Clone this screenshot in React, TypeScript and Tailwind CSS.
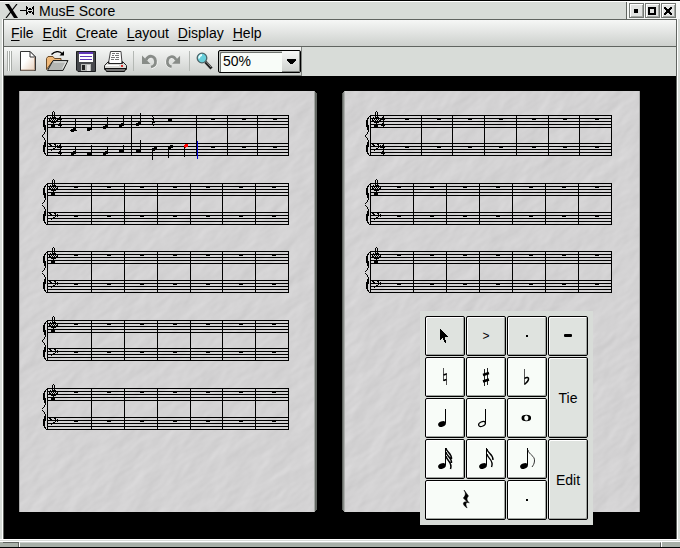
import type { ReactNode } from "react";

/** Draws a small pixel glyph; every "#" is one filled unit square. */
function Bitmap({ rows, x = 0, y = 0, fill = "#000" }: { rows: string[]; x?: number; y?: number; fill?: string }) {
  let d = "";
  rows.forEach((row, r) => {
    for (const run of row.matchAll(/#+/g)) {
      d += `M${x + (run.index ?? 0)} ${y + r}h${run[0].length}v1h${-run[0].length}z`;
    }
  });
  return <path d={d} fill={fill} shapeRendering="crispEdges" />;
}

/* ---------- score ---------- */

const TREBLE = [
  "....#....",
  "...#.#...",
  "...#.#...",
  "...#.#...",
  "...##....",
  "...#.#...",
  ".#.####..",
  "##.#.#.#.",
  "#.#.#.#.#",
  "##.#.#.##",
  ".#.#.#.#.",
  "..#####..",
  "....#....",
  "...###...",
  "..####...",
  "..####...",
  "...##....",
];
const BASS = [
  "..###...#",
  "##...##..",
  ".##...#.#",
  ".....##..",
  "......#.#",
  "....##...",
  "...#.....",
  "..#......",
];
const BRACE_TOP = [
  "....#", "...#.", "..##.", "..#..", ".##..", ".##..", ".##..", ".##..", ".##..", ".###.", ".###.",
  "..##.", "..##.", "..##.", "...#.", "...#.", "..#..", "..#..", ".#...", "#....",
];
const BRACE_BOTTOM = [...BRACE_TOP].reverse();
const FOUR = ["..#.", ".##.", "#.#.", "####", "..#."];
const QUARTER_REST = ["#..", ".#.", "##.", "##.", ".#.", "..#", "###", "#..", "#..", ".#."];
const HEAD = ["..###", "#####", "#####", "###.."];

type Note = { x: number; y: number; tip: number; down?: boolean; color?: string };
type SystemData = { y: number; bass: number; bars: number[]; rests: number[]; time?: boolean; notes?: boolean };

const NOTES: Note[] = [
  { x: 24, y: 13, tip: 3 },
  { x: 40, y: 12, tip: 4 },
  { x: 56, y: 10, tip: 2 },
  { x: 72, y: 8, tip: 1 },
  { x: 89, y: 7, tip: -2 },
  { x: 24, y: 36, tip: 31 },
  { x: 40, y: 37, tip: 30 },
  { x: 56, y: 36, tip: 31 },
  { x: 72, y: 34, tip: 30 },
  { x: 89, y: 34, tip: 25 },
  { x: 105, y: 32, tip: 44, down: true },
  { x: 121, y: 30, tip: 42, down: true },
  { x: 137, y: 29, tip: 41, down: true, color: "#f00" },
];

const BARS = [44, 77, 110, 143, 175, 208, 241];
const RESTS = [27, 60, 93, 126, 159, 192, 225];

const PAGES: SystemData[][] = [
  [
    { y: 24, bass: 28, bars: [84, 149, 180, 210, 241], rests: [164, 195, 226], time: true, notes: true },
    { y: 92, bass: 29, bars: BARS, rests: RESTS },
    { y: 160, bass: 29, bars: BARS, rests: RESTS },
    { y: 229, bass: 28, bars: BARS, rests: RESTS },
    { y: 297, bass: 29, bars: BARS, rests: RESTS },
  ],
  [
    { y: 24, bass: 28, bars: [51, 82, 114, 146, 178, 209, 241], rests: [35, 67, 98, 129, 162, 193, 225], time: true },
    { y: 92, bass: 29, bars: [43, 76, 109, 142, 175, 208, 241], rests: RESTS },
    { y: 160, bass: 29, bars: [43, 76, 109, 142, 175, 208, 241], rests: RESTS },
  ],
];

function System({ y, bass, bars, rests, time, notes }: SystemData) {
  const height = bass + 13;
  return (
    <g transform={`translate(28 ${y})`} shapeRendering="crispEdges">
      {[0, bass].map((top) =>
        [0, 3, 6, 9, 12].map((l) => <rect key={`${top}-${l}`} x={0} y={top + l} width={242} height={1} />),
      )}
      {[0, ...bars].map((b) => (
        <rect key={b} x={b} y={0} width={1} height={height} />
      ))}
      {rests.map((r) => (
        <path key={r} d={`M${r} 4h4v1h-4zM${r} ${bass + 4}h4v1h-4z`} />
      ))}
      <Bitmap rows={BRACE_TOP} x={-5} y={1} />
      <Bitmap rows={BRACE_BOTTOM} x={-5} y={bass - 7} />
      <Bitmap rows={TREBLE} x={2} y={-4} />
      <Bitmap rows={BASS} x={2} y={bass} />
      {time &&
        [1, 7, bass + 1, bass + 7].map((t) => <Bitmap key={t} rows={FOUR} x={11} y={t} />)}
      {notes && (
        <>
          {NOTES.map((n, i) => (
            <g key={i}>
              <Bitmap rows={n.color ? [".###", "####", "####", "##.."] : HEAD} x={n.x} y={n.y} fill={n.color} />
              {n.down ? (
                <rect x={n.x} y={n.y + 3} width={1} height={n.tip - n.y - 2} />
              ) : (
                <rect x={n.x + 4} y={n.tip} width={1} height={n.y - n.tip + 1} />
              )}
            </g>
          ))}
          <rect x={23} y={15} width={7} height={1} />
          <Bitmap rows={QUARTER_REST} x={105} y={1} />
          <rect x={121} y={4} width={4} height={2} />
          <rect x={150} y={26} width={1} height={18} fill="#0000d8" />
        </>
      )}
    </g>
  );
}

function Page({ index }: { index: number }) {
  const left = index === 0;
  return (
    <svg viewBox="0 0 298 421" className="h-[421px] w-[298px] shrink-0 bg-[#d3d2d3]" role="img" aria-label={`Page ${index + 1}`}>
      <filter id={`paper${index}`} x="0" y="0" width="100%" height="100%" colorInterpolationFilters="sRGB">
        <feTurbulence type="fractalNoise" baseFrequency="0.03 0.06" numOctaves={3} seed={index + 4} />
        <feDiffuseLighting surfaceScale={0.35} diffuseConstant={1.17} lightingColor="#d5d4d5">
          <feDistantLight azimuth={235} elevation={58} />
        </feDiffuseLighting>
      </filter>
      <g transform="rotate(-35 149 210)">
        <rect x={-120} y={-70} width={540} height={560} filter={`url(#paper${index})`} />
      </g>
      {left ? (
        <g shapeRendering="crispEdges">
          <rect width={1} height={421} fill="#aaa" />
          <rect x={295} width={1} height={421} fill="#a5a8a5" />
          <rect x={296} width={2} height={421} fill="#626662" />
          <path d="M296 0h2v2h-1v-1h-1zM297 419h1v2h-2v-1h1z" />
        </g>
      ) : (
        <g shapeRendering="crispEdges">
          <rect width={1} height={421} fill="#626662" />
          <rect x={1} width={1} height={421} fill="#858885" />
          <rect x={2} width={1} height={421} fill="#adb0ad" />
          <rect x={297} width={1} height={421} fill="#aaa" />
          <path d="M0 0h2v1h-1v1h-1zM0 419h1v1h1v1h-2z" />
        </g>
      )}
      {PAGES[index].map((s) => (
        <System key={s.y} {...s} />
      ))}
    </svg>
  );
}

/* ---------- title bar ---------- */

function WindowButton({ label, rows }: { label: string; rows: string[] }) {
  return (
    <button aria-label={label} className="grid h-[15px] w-[15px] place-items-center border border-[#747874] bg-[#e2e4e2] shadow-[inset_1px_1px_0_#fff,inset_-1px_-1px_0_#a4a8a4]">
      <svg viewBox="0 0 9 9" className="h-[9px] w-[9px]">
        <Bitmap rows={rows} />
      </svg>
    </button>
  );
}

const DOT = ["", "", "", "..####", "..####", "..####", "..####"];
const BOX = ["", "########", "########", "##....##", "##....##", "##....##", "##....##", "########", "########"];
const CLOSE = ["", "##....##", "###..###", ".######.", "..####..", "..####..", ".######.", "###..###", "##....##"];
const PIN = [
  "......#......#",
  "......##....##",
  "......##.##.##",
  "......#.####.#",
  "#######......#",
  "......#.####.#",
  "......##.##.##",
  "......##....##",
  "......#......#",
];

/* ---------- toolbar ---------- */

function Tool({ label, width, children }: { label: string; width: string; children: ReactNode }) {
  return (
    <button aria-label={label} title={label} className={`flex h-6 shrink-0 items-center justify-center ${width}`}>
      {children}
    </button>
  );
}

const Separator = () => <span className="h-5 w-px shrink-0 bg-[#b4b8b4]" />;

function NewIcon() {
  return (
    <svg viewBox="0 0 16 20" className="h-5 w-4">
      <defs>
        <linearGradient id="sheet" x1="0" y1="0" x2="1" y2="1">
          <stop offset="0.4" stopColor="#fff" />
          <stop offset="1" stopColor="#e5cdb8" />
        </linearGradient>
      </defs>
      <path d="M.5.5H10l5.500 5.500V19.500H.5z" fill="url(#sheet)" stroke="#333" />
      <path d="M10 .5V6h5.500z" fill="#fff" stroke="#333" />
      <path d="M14.500 6.500v12.500H1" fill="none" stroke="#b59a86" />
    </svg>
  );
}

function OpenIcon() {
  return (
    <svg viewBox="0 0 23 20" className="h-5 w-[23px]">
      <path d="M.5 18.500V7.500L2 5.500h5L8.500 7.500h6.500V10L6 11z" fill="#efb878" stroke="#6a4a26" />
      <path d="M1.500 19.500L7 9.500h15L17 19.500z" fill="#b4b6b4" stroke="#222" />
      <path d="M8 11h12l-3.500 6.500" fill="none" stroke="#e8eae8" />
      <path d="M5.500 3.500C9-.5 14 0 16.500 3" fill="none" stroke="#000" strokeWidth="1.300" />
      <path d="M13.500 4.500h4.500V0z" fill="#000" />
    </svg>
  );
}

function SaveIcon() {
  return (
    <svg viewBox="0 0 20 21" className="h-[21px] w-5">
      <path d="M.5.5h19v20H2L.5 19z" fill="#46484c" stroke="#1c1d20" />
      <path d="M3 1h14v10H3z" fill="#fff" />
      <path d="M3 1h14v2H3zM4 5h12v1H4zM4 8h12v1H4z" fill="#6238b8" />
      <path d="M5 13h10v7H5z" fill="#b8bab8" />
      <path d="M6 14h3v5H6z" fill="#222" />
      <path d="M11 14h3v6h-3z" fill="#e6e6e6" />
    </svg>
  );
}

function PrintIcon() {
  return (
    <svg viewBox="0 0 23 21" className="h-[21px] w-[23px]">
      <path d="M6.500.5h10.500l1 11.500H4.500z" fill="#fff" stroke="#444" />
      <path d="M8 2.500h3m1 0h3M8 4.500h2m1 0h4M7 6.500h4m1 0h3M7 8.500h3m1 0h4" stroke="#777" />
      <path d="M4.500 10.500L.5 14.500v4h22v-4l-4-4v2H4.500z" fill="#dcdcd8" stroke="#222" />
      <path d="M2 14.500h13M6 11.500h11" stroke="#fff" />
      <path d="M17 15h2" stroke="#d33" strokeWidth="2" />
      <path d="M1 17.500h21l-1.500 3H2.500z" fill="#777" stroke="#111" />
    </svg>
  );
}

function TurnIcon({ flip }: { flip?: boolean }) {
  return (
    <svg viewBox="0 0 17 15" className="h-[15px] w-[17px]">
      <g transform={flip ? "translate(17 0) scale(-1 1)" : undefined} fill="none">
        <path d="M6 6C9 1 15 3 15.500 8c.3 3-2 5.500-5 6" stroke="#fff" strokeWidth="2" />
        <path d="M5 6C8 0 14 2 14.500 7c.3 3.500-2 5.500-4.500 6" stroke="#888c88" strokeWidth="2.800" />
        <path d="M1 1.500V10h8.500z" fill="#888c88" />
      </g>
    </svg>
  );
}

function ZoomIcon() {
  return (
    <svg viewBox="0 0 17 18" className="h-[18px] w-[17px]">
      <path d="M9.500 10l6 6.500" stroke="#222" strokeWidth="3" />
      <path d="M10.500 10l4.500 5" stroke="#999" />
      <circle cx="6" cy="6" r="4.800" fill="#68d0dc" stroke="#4c6468" strokeWidth="1.300" />
      <path d="M3.200 6.500A3 3 0 0 1 6 3" stroke="#e8ffff" strokeWidth="1.800" fill="none" />
    </svg>
  );
}

/* ---------- note palette ---------- */

function Key({ label, light, className = "", children }: { label: string; light?: boolean; className?: string; children: ReactNode }) {
  const bg = light ? "bg-[#f8fcf8]" : "bg-[#dfe3df]";
  return (
    <button
      aria-label={label}
      className={`grid place-items-center overflow-hidden rounded-[2px] border border-black shadow-[inset_1px_1px_0_#fff,inset_-1px_-1px_0_#a0a4a0] ${bg} ${className}`}
    >
      {children}
    </button>
  );
}

const Glyph = ({ children }: { children: ReactNode }) => (
  <svg viewBox="1 1 38 38" className="h-[38px] w-[38px]">
    {children}
  </svg>
);

const POINTER = [
  "#.......", "##......", "###.....", "####....", "#####...", "######..", "#######.", "########",
  "#####...", "##.##...", "#..##...", "....##..", "....##..", ".....#..",
];

const Head = ({ cy = 26 }: { cy?: number }) => (
  <ellipse cx={17} cy={cy} rx={4} ry={2.700} transform={`rotate(-22 17 ${cy})`} />
);
const Dot = () => <rect x={19} y={19} width={2} height={2} />;

export default function App() {
  return (
    <div className="flex min-h-screen flex-col border-t border-b border-black bg-[#d8dcd8] font-['Liberation_Sans',Arial,sans-serif] text-sm text-black">
      <header className="flex h-[18px] items-center border-t border-white pl-[5px]">
        <svg viewBox="0 0 30 14" className="h-[14px] w-[30px]">
          <path d="M0 0h4l9 14H9z" fill="#000" />
          <path d="M12 0L1 14" stroke="#000" strokeWidth="1.200" />
          <Bitmap rows={PIN} x={15} y={2} />
        </svg>
        <h1 className="ml-1 flex-1 leading-4">MusE Score</h1>
        <div className="flex h-[18px] items-center gap-px border-l border-[#606460] bg-[#f4f6f4] pr-1 pl-0.5">
          <WindowButton label="Minimize" rows={DOT} />
          <WindowButton label="Maximize" rows={BOX} />
          <WindowButton label="Close" rows={CLOSE} />
        </div>
      </header>

      <div className="flex flex-1 flex-col border-r-2 border-l-2 border-r-[#d8dcd8] border-l-[#d8dcd8]">
        <div className="flex flex-1 flex-col border-r border-l border-r-white border-l-white">
          <div className="flex flex-1 flex-col border-r border-l border-[#606460]">
            <nav className="flex h-7 items-center gap-[9px] border-t border-b border-[#606460] bg-linear-to-b from-[#f6f7f6] to-[#cdd0cd] px-[7px]">
              {["File", "Edit", "Create", "Layout", "Display", "Help"].map((m) => (
                <button key={m} className="leading-5">
                  <span className="underline underline-offset-2">{m[0]}</span>
                  {m.slice(1)}
                </button>
              ))}
            </nav>

            <div className="flex h-[29px] shrink-0">
              <div role="toolbar" className="flex items-center border-r border-b border-[#808480] bg-linear-to-b from-[#f6f7f6] to-[#cdd0cd] pl-[3px]">
                <span className="flex h-5 w-[5px] justify-between border-r border-l border-[#a8aca8] bg-[#fafcfa] px-px">
                  <span className="w-px bg-[#a8aca8]" />
                </span>
                <Tool label="New" width="w-8"><NewIcon /></Tool>
                <Tool label="Open" width="w-[27px]"><OpenIcon /></Tool>
                <Tool label="Save" width="w-[30px]"><SaveIcon /></Tool>
                <Tool label="Print" width="w-7"><PrintIcon /></Tool>
                <span className="w-1" />
                <Separator />
                <Tool label="Undo" width="w-[31px]"><TurnIcon /></Tool>
                <Tool label="Redo" width="w-4"><TurnIcon flip /></Tool>
                <span className="w-2" />
                <Separator />
                <Tool label="Zoom" width="w-7"><ZoomIcon /></Tool>
                <div className="relative">
                  <select
                    aria-label="Zoom level"
                    defaultValue="50%"
                    className="block h-[23px] w-[83px] appearance-none rounded-[2px] border border-black bg-[#f8fcf8] pl-1 leading-5 shadow-[inset_1px_1px_0_#c0c4c0,inset_2px_2px_0_#707470]"
                  >
                    <option>50%</option>
                    <option>100%</option>
                    <option>200%</option>
                  </select>
                  <span className="pointer-events-none absolute top-px right-px grid h-[21px] w-[18px] place-items-center bg-linear-to-b from-[#f6f7f6] to-[#cdd0cd] shadow-[inset_-1px_-1px_0_#808480]">
                    <svg viewBox="0 0 9 5" className="h-[5px] w-[9px]">
                      <Bitmap rows={["#########", "#########", ".#######.", "..#####..", "...###..."]} />
                    </svg>
                  </span>
                </div>
              </div>
            </div>

            <main className="relative flex flex-1 items-start gap-[25px] overflow-hidden bg-black p-[15px]">
              <Page index={0} />
              <Page index={1} />

              <div className="absolute top-[235px] left-[416px] grid grid-cols-[repeat(4,40px)] grid-rows-[repeat(5,40px)] gap-px bg-[#d8dcd8] p-[5px]">
                <Key label="Select">
                  <Glyph><Bitmap rows={POINTER} x={15} y={13} /></Glyph>
                </Key>
                <Key label="Accent"><span className="text-xs">&gt;</span></Key>
                <Key label="Staccato"><Glyph><Dot /></Glyph></Key>
                <Key label="Tenuto"><Glyph><rect x={16} y={18} width={8} height={3} rx={1} /></Glyph></Key>

                <Key label="Natural" light>
                  <Glyph>
                    <path d="M18.500 11v13M21.500 16v12" stroke="#555" />
                    <path d="M18.500 18l3-1M18.500 23.500l3-1" stroke="#000" strokeWidth="1.800" />
                  </Glyph>
                </Key>
                <Key label="Sharp" light>
                  <Glyph>
                    <path d="M18.500 12v17M21.500 11v17" stroke="#222" />
                    <path d="M17 18l6-2M17 24.500l6-2" stroke="#000" strokeWidth="2.500" />
                  </Glyph>
                </Key>
                <Key label="Flat" light>
                  <Glyph>
                    <path d="M17.500 12v15.500" stroke="#555" />
                    <path d="M17.500 21.500c2.500-2 4.500-1 4 1-.4 2-2 3.500-4 5" fill="none" stroke="#000" strokeWidth="1.500" />
                  </Glyph>
                </Key>
                <Key label="Tie" className="row-span-2">Tie</Key>

                <Key label="Quarter note" light>
                  <Glyph><Head /><path d="M20.500 11v14" stroke="#000" /></Glyph>
                </Key>
                <Key label="Half note" light>
                  <Glyph>
                    <ellipse cx={16} cy={26} rx={3.600} ry={2.200} transform="rotate(-25 16 26)" fill="none" stroke="#000" strokeWidth="1.200" />
                    <path d="M19.500 11v14" stroke="#000" />
                  </Glyph>
                </Key>
                <Key label="Whole note" light>
                  <Glyph>
                    <path fillRule="evenodd" d="M14.500 20a4.800 3.200 0 1 0 9.600 0a4.800 3.200 0 1 0-9.600 0zM17.300 19.300a2 2.400 0 1 0 4 1.400a2 2.400 0 1 0-4-1.400z" />
                  </Glyph>
                </Key>

                <Key label="Thirty-second note" light>
                  <Glyph>
                    <Head cy={27} />
                    <path d="M20.500 9v17" stroke="#000" />
                    <path d="M21 9c0 4 6 5 5.500 11M21 13c0 4 6 5 5.500 11M21 17c0 4 7 6 4.500 13" fill="none" stroke="#000" strokeWidth="1.500" />
                  </Glyph>
                </Key>
                <Key label="Sixteenth note" light>
                  <Glyph>
                    <Head cy={27} />
                    <path d="M20.500 9v17" stroke="#000" />
                    <path d="M21 10c0 4 6.500 5 6 11M21 15c0 4 7.500 6 4.500 13" fill="none" stroke="#000" strokeWidth="1.400" />
                  </Glyph>
                </Key>
                <Key label="Eighth note" light>
                  <Glyph>
                    <Head cy={27} />
                    <path d="M20.500 9v17" stroke="#000" />
                    <path d="M21 11c1 5 7 5.500 6.500 11-.2 3-1.500 4.500-2.500 6" fill="none" stroke="#333" />
                  </Glyph>
                </Key>
                <Key label="Edit" className="row-span-2">Edit</Key>

                <Key label="Rest" light className="col-span-2">
                  <Glyph>
                    <path d="M18 10l4.500 6c-2.500 2.500-1.500 4.500.8 7-3-1.500-4.500.5-2.200 5-5.500-3.500-4.500-7 .2-6l-4-4c2.500-2.500 2.700-5 .7-8z" stroke="#000" strokeWidth="0.500" />
                  </Glyph>
                </Key>
                <Key label="Dotted" light><Glyph><Dot /></Glyph></Key>
              </div>
            </main>
          </div>
        </div>
      </div>

      <footer className="border-t border-white">
        <div className="mt-px flex h-[6px] border-t border-white bg-[#a8b0a8] px-[3px]">
          <span className="w-4 border-t border-r border-[#606460]" />
          <span className="flex-1 border-t border-r border-l border-t-[#c8ccc8] border-r-[#606460] border-l-white" />
          <span className="w-4 border-l border-white" />
        </div>
      </footer>
    </div>
  );
}
